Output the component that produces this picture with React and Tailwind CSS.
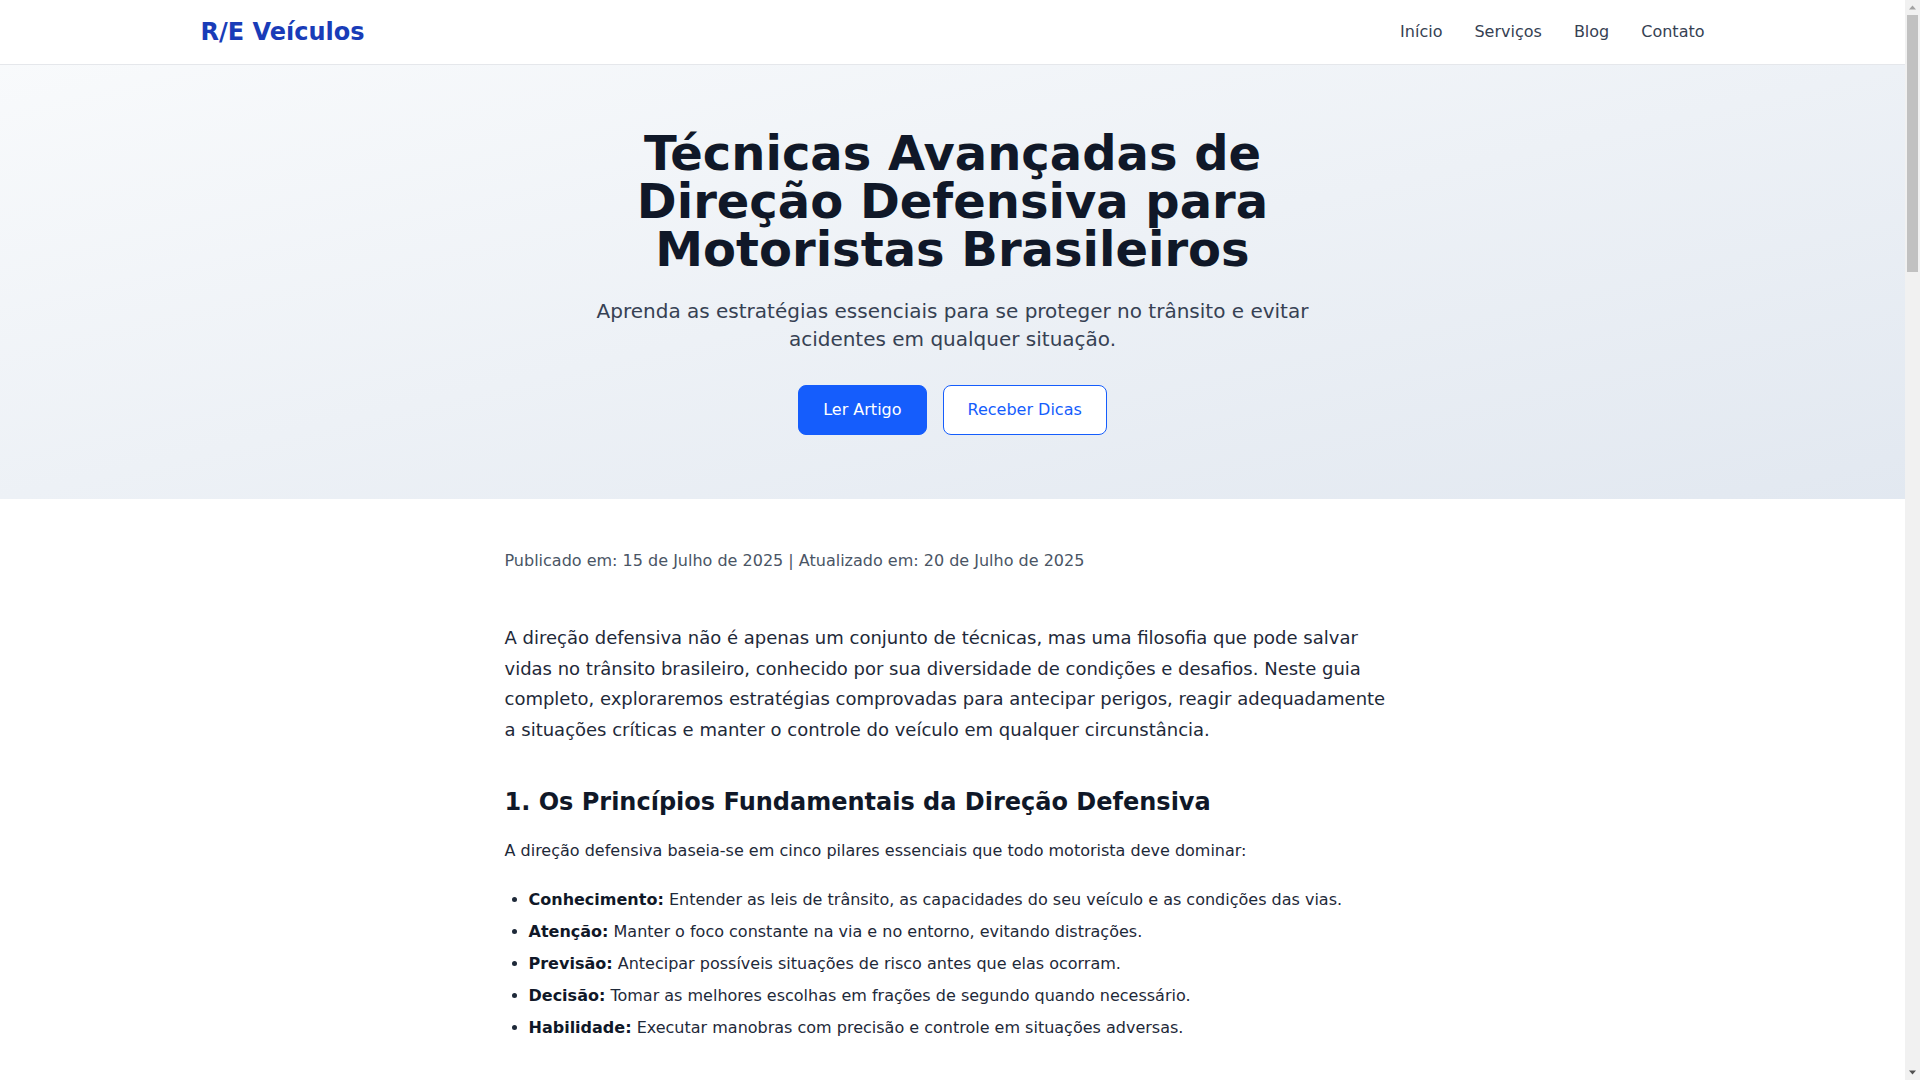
import React from 'react';

const navLinks = ['Início', 'Serviços', 'Blog', 'Contato'];

const pillars = [
  { label: 'Conhecimento:', text: 'Entender as leis de trânsito, as capacidades do seu veículo e as condições das vias.' },
  { label: 'Atenção:', text: 'Manter o foco constante na via e no entorno, evitando distrações.' },
  { label: 'Previsão:', text: 'Antecipar possíveis situações de risco antes que elas ocorram.' },
  { label: 'Decisão:', text: 'Tomar as melhores escolhas em frações de segundo quando necessário.' },
  { label: 'Habilidade:', text: 'Executar manobras com precisão e controle em situações adversas.' },
];

const sections = [
  {
    title: '2. Mantendo a Distância de Segurança',
    body: 'Uma das regras mais importantes da direção defensiva é manter uma distância segura do veículo à frente. A chamada "regra dos dois segundos" é uma referência simples e eficaz: escolha um ponto fixo na via e conte o tempo entre a passagem do carro da frente e do seu.',
    items: [
      { label: 'Pista seca:', text: 'Mantenha no mínimo dois segundos de distância.' },
      { label: 'Chuva:', text: 'Dobre a distância para compensar a menor aderência dos pneus.' },
      { label: 'Neblina:', text: 'Reduza a velocidade e aumente ainda mais o espaço.' },
      { label: 'Veículos pesados:', text: 'Caminhões e ônibus precisam de mais espaço para frear.' },
    ],
  },
  {
    title: '3. Condições Adversas nas Estradas Brasileiras',
    body: 'O Brasil apresenta uma enorme variedade de cenários: rodovias movimentadas, estradas de terra, chuvas tropicais intensas e trechos com pouca sinalização. Adaptar a condução a cada situação é fundamental para evitar acidentes.',
    items: [
      { label: 'Aquaplanagem:', text: 'Não freie bruscamente; segure o volante firme e tire o pé do acelerador.' },
      { label: 'Buracos:', text: 'Observe a via com antecedência e reduza a velocidade em trechos irregulares.' },
      { label: 'Iluminação:', text: 'Use farol baixo em rodovias, inclusive durante o dia.' },
      { label: 'Animais na pista:', text: 'Redobre a atenção em áreas rurais, principalmente à noite.' },
    ],
  },
  {
    title: '4. Controle de Velocidade e Frenagem',
    body: 'Respeitar os limites de velocidade não é apenas uma questão de evitar multas. A velocidade adequada garante tempo de reação suficiente e reduz a gravidade das colisões quando elas acontecem.',
    items: [
      { label: 'Freio ABS:', text: 'Pise firme e mantenha o pedal pressionado em uma emergência.' },
      { label: 'Freio motor:', text: 'Utilize marchas mais baixas em descidas longas.' },
      { label: 'Curvas:', text: 'Reduza a velocidade antes de entrar na curva, nunca durante.' },
    ],
  },
  {
    title: '5. Manutenção Preventiva do Veículo',
    body: 'Um veículo bem conservado responde melhor aos comandos do motorista. Revisões periódicas evitam falhas mecânicas que podem colocar vidas em risco.',
    items: [
      { label: 'Pneus:', text: 'Verifique a calibragem e o desgaste regularmente.' },
      { label: 'Freios:', text: 'Troque pastilhas e fluido conforme o manual do fabricante.' },
      { label: 'Luzes:', text: 'Confira faróis, lanternas e setas antes de viagens longas.' },
      { label: 'Limpadores:', text: 'Substitua as palhetas ao primeiro sinal de falha.' },
    ],
  },
  {
    title: '6. Comportamento e Atitude ao Volante',
    body: 'A direção defensiva também envolve controle emocional. Evite discussões no trânsito, não responda a provocações e lembre-se de que chegar em segurança é sempre mais importante do que chegar rápido.',
    items: [
      { label: 'Paciência:', text: 'Respeite o tempo dos outros motoristas e pedestres.' },
      { label: 'Descanso:', text: 'Faça pausas a cada duas horas em viagens longas.' },
      { label: 'Celular:', text: 'Nunca utilize o telefone enquanto dirige.' },
    ],
  },
];

const BulletList = ({ items }) => (
  <ul className="list-disc pl-6 space-y-2 text-gray-800 mb-6">
    {items.map((item) => (
      <li key={item.label} className="leading-6">
        <strong className="font-bold text-gray-900">{item.label}</strong> {item.text}
      </li>
    ))}
  </ul>
);

// classic browser scrollbar, as seen on the right edge of the page
const ScrollTrack = () => (
  <div className="w-[15px] shrink-0 bg-[#f1f1f1] flex flex-col items-center">
    <svg width="15" height="15" viewBox="0 0 15 15" className="shrink-0">
      <path d="M4 9.5 L7.5 5.5 L11 9.5 Z" fill="#a3a3a3" />
    </svg>
    <div className="w-[11px] h-[257px] bg-[#c1c1c1] shrink-0" />
    <div className="flex-1" />
    <svg width="15" height="15" viewBox="0 0 15 15" className="shrink-0">
      <path d="M4 5.5 L11 5.5 L7.5 9.5 Z" fill="#505050" />
    </svg>
  </div>
);

const App = () => {
  return (
    <div className="h-screen flex bg-white font-['DejaVu_Sans',sans-serif] text-gray-800">
      <div className="flex-1 min-w-0 overflow-y-auto [scrollbar-width:none]">
        <header className="bg-white border-b border-gray-200">
          <div className="container mx-auto px-4 h-16 flex items-center justify-between">
            <a href="#" className="text-2xl font-bold text-blue-800">R/E Veículos</a>
            <nav className="flex items-center gap-8">
              {navLinks.map((link) => (
                <a key={link} href="#" className="text-base text-gray-700 hover:text-blue-800">
                  {link}
                </a>
              ))}
            </nav>
          </div>
        </header>

        <section className="bg-gradient-to-br from-slate-50 to-slate-200 py-16">
          <div className="max-w-3xl mx-auto text-center">
            <h1 className="text-5xl leading-none font-bold text-gray-900 mb-6">
              Técnicas Avançadas de Direção Defensiva para Motoristas Brasileiros
            </h1>
            <p className="text-xl text-gray-700 mb-8">
              Aprenda as estratégias essenciais para se proteger no trânsito e evitar acidentes em qualquer situação.
            </p>
            <div className="flex justify-center gap-4">
              <a href="#artigo" className="px-6 py-3 rounded-lg bg-blue-600 border border-blue-600 text-white hover:bg-blue-700">
                Ler Artigo
              </a>
              <a href="#" className="px-6 py-3 rounded-lg bg-white border border-blue-600 text-blue-600 hover:bg-blue-50">
                Receber Dicas
              </a>
            </div>
          </div>
        </section>

        <article id="artigo" className="max-w-4xl mx-auto pt-[50px] pb-20">
          <p className="text-gray-600 mb-[50px]">
            Publicado em: 15 de Julho de 2025 | Atualizado em: 20 de Julho de 2025
          </p>

          <p className="text-lg leading-[1.7] text-gray-800 mb-6">
            A direção defensiva não é apenas um conjunto de técnicas, mas uma filosofia que pode salvar vidas no trânsito
            brasileiro, conhecido por sua diversidade de condições e desafios. Neste guia completo, exploraremos estratégias
            comprovadas para antecipar perigos, reagir adequadamente a situações críticas e manter o controle do veículo em
            qualquer circunstância.
          </p>

          <h2 className="text-2xl font-bold text-gray-900 mt-[41px] mb-[21px]">
            1. Os Princípios Fundamentais da Direção Defensiva
          </h2>
          <p className="mb-[25px]">A direção defensiva baseia-se em cinco pilares essenciais que todo motorista deve dominar:</p>
          <BulletList items={pillars} />

          {sections.map((section) => (
            <div key={section.title}>
              <h2 className="text-2xl font-bold text-gray-900 mt-[41px] mb-[21px]">{section.title}</h2>
              <p className="text-lg leading-[1.7] text-gray-800 mb-6">{section.body}</p>
              <BulletList items={section.items} />
              <p className="text-lg leading-[1.7] text-gray-800 mb-6">
                Praticar esses cuidados diariamente transforma a forma como você dirige e reduz significativamente o risco
                de acidentes para você, seus passageiros e todos que compartilham a via.
              </p>
            </div>
          ))}

          <h2 className="text-2xl font-bold text-gray-900 mt-[41px] mb-[21px]">Conclusão</h2>
          <p className="text-lg leading-[1.7] text-gray-800 mb-6">
            Dirigir de forma defensiva é um compromisso diário com a sua segurança e a de todos ao seu redor. Coloque essas
            técnicas em prática, mantenha seu veículo em dia e continue aprendendo: o trânsito brasileiro exige atenção
            constante, mas com preparo e responsabilidade é possível chegar sempre bem ao seu destino.
          </p>

          <div className="mt-12 p-8 rounded-lg bg-slate-100 text-center">
            <h3 className="text-xl font-bold text-gray-900 mb-3">Quer receber mais dicas de segurança?</h3>
            <p className="text-gray-600 mb-6">Cadastre-se e receba conteúdos exclusivos sobre direção e manutenção veicular.</p>
            <a href="#" className="inline-block px-6 py-3 rounded-lg bg-blue-600 text-white">Receber Dicas</a>
          </div>
        </article>

        <footer className="bg-gray-900 text-gray-300 py-12">
          <div className="container mx-auto px-4 flex items-center justify-between">
            <span className="text-xl font-bold text-white">R/E Veículos</span>
            <span className="text-sm">© 2025 R/E Veículos. Todos os direitos reservados.</span>
          </div>
        </footer>
      </div>
      <ScrollTrack />
    </div>
  );
};

export default App;
